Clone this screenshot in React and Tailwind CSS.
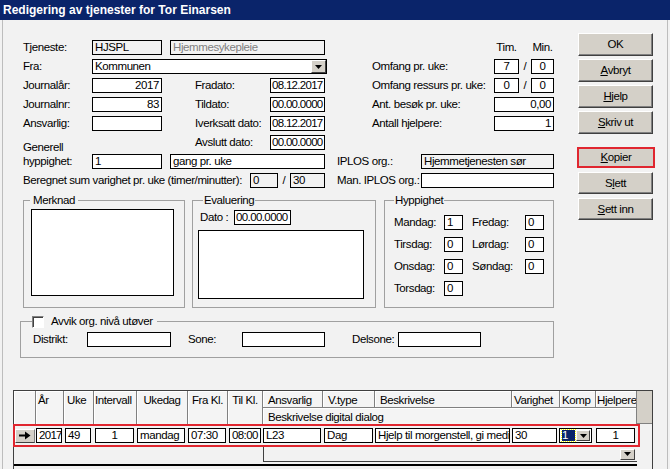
import React from "react";

const Box = ({ className = "", children }) => (
  <div
    className={
      "h-[15px] shrink-0 border border-black px-[2px] leading-[13px] whitespace-nowrap overflow-hidden " +
      className
    }
  >
    {children}
  </div>
);

const Tri = () => (
  <svg width="7" height="4" viewBox="0 0 7 4">
    <path d="M0 0h7L3.5 4z" fill="#000" />
  </svg>
);

const DropBtn = ({ className = "" }) => (
  <div
    className={
      "flex items-center justify-center shrink-0 bg-[#d4d0c8] border border-t-white border-l-white border-b-[#404040] border-r-[#404040] " +
      className
    }
  >
    <Tri />
  </div>
);

const Btn = ({ children, className = "" }) => (
  <div
    className={
      "w-[75px] flex items-center justify-center bg-[#d4d0c8] border border-t-white border-l-white border-b-[#404040] border-r-[#404040] shadow-[inset_-1px_-1px_0_#808080] " +
      className
    }
  >
    {children}
  </div>
);

const U = ({ children }) => <span className="underline">{children}</span>;

const Row = ({ children }) => <div className="flex h-[15px] items-center">{children}</div>;

const DateBox = ({ children }) => (
  <Box className="w-[55px] bg-white px-0 pl-[1px] tracking-[-0.7px]">{children}</Box>
);

const HCell = ({ children, className = "" }) => (
  <div
    className={
      "bg-[#f4f4f4] border-r border-[#808080] shadow-[inset_1px_1px_0_#fff] whitespace-nowrap overflow-hidden leading-[13px] pt-[3px] " +
      className
    }
  >
    {children}
  </div>
);

const DCell = ({ children, className = "" }) => (
  <div className="h-[19px] flex items-center">
    <Box className={"w-full bg-white " + className}>{children}</Box>
  </div>
);

export default function App() {
  return (
    <div className="w-[670px] h-[469px] overflow-hidden bg-[#f2f2f2] text-black text-[11.5px] tracking-[-0.4px] leading-[13px] whitespace-nowrap font-['Liberation_Sans',Arial,sans-serif]">
      <div className="h-[20px] bg-[#0a246a] text-white font-bold text-[12px] tracking-normal flex items-center pl-[3px]">
        Redigering av tjenester for Tor Einarsen
      </div>
      <div className="h-[449px] mx-[2px] border-x border-[#bdbdbd] flex flex-col">
        {/* top section */}
        <div className="flex pt-[13px]">
          <div className="ml-[20px] mt-[7px] w-[531px] flex flex-col">
            <div className="flex flex-col gap-[4px]">
              <Row>
                <div className="w-[314px] shrink-0 flex items-center">
                  <div className="w-[69px]">Tjeneste:</div>
                  <Box className="w-[70px] bg-[#f2f2f2]">HJSPL</Box>
                  <Box className="w-[155px] ml-[8px] bg-[#f2f2f2] text-[#808080]">Hjemmesykepleie</Box>
                </div>
                <div className="flex items-center pl-[157px]">
                  <div className="w-[25px] text-center">Tim.</div>
                  <div className="w-[12px]" />
                  <div className="w-[23px] text-center">Min.</div>
                </div>
              </Row>
              <Row>
                <div className="w-[314px] shrink-0 flex items-center">
                  <div className="w-[69px]">Fra:</div>
                  <Box className="w-[235px] bg-white flex items-center justify-between pr-0">
                    <span>Kommunen</span>
                    <DropBtn className="w-[15px] h-[13px]" />
                  </Box>
                </div>
                <div className="flex items-center pl-[35px]">
                  <div className="w-[122px]">Omfang pr. uke:</div>
                  <Box className="w-[25px] bg-white text-center">7</Box>
                  <div className="w-[12px] text-center">/</div>
                  <Box className="w-[23px] bg-white text-center">0</Box>
                </div>
              </Row>
              <Row>
                <div className="w-[314px] shrink-0 flex items-center">
                  <div className="w-[69px]">Journalår:</div>
                  <Box className="w-[70px] bg-white text-right">2017</Box>
                  <div className="ml-[33px] w-[75px]">Fradato:</div>
                  <DateBox>08.12.2017</DateBox>
                </div>
                <div className="flex items-center pl-[35px]">
                  <div className="w-[122px]">Omfang ressurs pr. uke:</div>
                  <Box className="w-[25px] bg-white text-center">0</Box>
                  <div className="w-[12px] text-center">/</div>
                  <Box className="w-[23px] bg-white text-center">0</Box>
                </div>
              </Row>
              <Row>
                <div className="w-[314px] shrink-0 flex items-center">
                  <div className="w-[69px]">Journalnr:</div>
                  <Box className="w-[70px] bg-white text-right">83</Box>
                  <div className="ml-[33px] w-[75px]">Tildato:</div>
                  <DateBox>00.00.0000</DateBox>
                </div>
                <div className="flex items-center pl-[35px]">
                  <div className="w-[122px]">Ant. besøk pr. uke:</div>
                  <Box className="w-[60px] bg-white text-right">0,00</Box>
                </div>
              </Row>
              <Row>
                <div className="w-[314px] shrink-0 flex items-center">
                  <div className="w-[69px]">Ansvarlig:</div>
                  <Box className="w-[70px] bg-white" />
                  <div className="ml-[33px] w-[75px]">Iverksatt dato:</div>
                  <DateBox>08.12.2017</DateBox>
                </div>
                <div className="flex items-center pl-[35px]">
                  <div className="w-[122px]">Antall hjelpere:</div>
                  <Box className="w-[60px] bg-white text-right">1</Box>
                </div>
              </Row>
              <Row>
                <div className="w-[314px] shrink-0 flex items-center">
                  <div className="ml-[172px] w-[75px]">Avslutt dato:</div>
                  <DateBox>00.00.0000</DateBox>
                </div>
              </Row>
              <Row>
                <div className="w-[314px] shrink-0 flex items-center">
                  <div className="w-[69px] h-[15px] flex flex-col justify-end pb-[1px]">
                    <div className="leading-[14px]">
                      Generell
                      <br />
                      hyppighet:
                    </div>
                  </div>
                  <Box className="w-[70px] bg-white">1</Box>
                  <Box className="w-[155px] ml-[8px] bg-white">gang pr. uke</Box>
                </div>
                <div className="flex items-center">
                  <div className="w-[84px]">IPLOS org.:</div>
                  <Box className="w-[133px] bg-[#f2f2f2]">Hjemmetjenesten sør</Box>
                </div>
              </Row>
              <Row>
                <div className="w-[314px] shrink-0 flex items-center">
                  <div className="w-[227px]">
                    Beregnet sum varighet pr. uke (timer/minutter):
                  </div>
                  <Box className="w-[28px] bg-[#f2f2f2]">0</Box>
                  <div className="w-[12px] text-center">/</div>
                  <Box className="w-[35px] bg-[#f2f2f2]">30</Box>
                </div>
                <div className="flex items-center">
                  <div className="w-[84px]">Man. IPLOS org.:</div>
                  <Box className="w-[133px] bg-white" />
                </div>
              </Row>
            </div>

            {/* group boxes */}
            <div className="flex mt-[6px]">
              <fieldset className="w-[162px] h-[114px] border border-[#a0a0a0]">
                <legend className="ml-[6px] px-[3px] leading-[13px]">Merknad</legend>
                <div className="mt-[2px] ml-[7px] w-[143px] h-[87px] bg-white border border-black" />
              </fieldset>
              <fieldset className="ml-[7px] w-[184px] h-[114px] border border-[#a0a0a0]">
                <legend className="ml-[10px] px-[1px] leading-[13px]">Evaluering</legend>
                <div className="mt-[3px] ml-[7px] flex items-center h-[15px]">
                  <div className="w-[34px]">Dato :</div>
                  <Box className="w-[57px] bg-white px-0 pl-[1px] tracking-[-0.6px]">00.00.0000</Box>
                </div>
                <div className="mt-[5px] ml-[5px] w-[166px] h-[69px] bg-white border border-black" />
              </fieldset>
              <fieldset className="ml-[8px] w-[170px] h-[114px] border border-[#a0a0a0]">
                <legend className="ml-[9px] px-[1px] leading-[13px]">Hyppighet</legend>
                <div className="mt-[8px] ml-[9px] flex flex-col gap-[7px]">
                  <Row>
                    <div className="w-[50px]">Mandag:</div>
                    <Box className="w-[19px] bg-white px-[1px]">1</Box>
                    <div className="ml-[9px] w-[53px]">Fredag:</div>
                    <Box className="w-[19px] bg-white px-[1px]">0</Box>
                  </Row>
                  <Row>
                    <div className="w-[50px]">Tirsdag:</div>
                    <Box className="w-[19px] bg-white px-[1px]">0</Box>
                    <div className="ml-[9px] w-[53px]">Lørdag:</div>
                    <Box className="w-[19px] bg-white px-[1px]">0</Box>
                  </Row>
                  <Row>
                    <div className="w-[50px]">Onsdag:</div>
                    <Box className="w-[19px] bg-white px-[1px]">0</Box>
                    <div className="ml-[9px] w-[53px]">Søndag:</div>
                    <Box className="w-[19px] bg-white px-[1px]">0</Box>
                  </Row>
                  <Row>
                    <div className="w-[50px]">Torsdag:</div>
                    <Box className="w-[19px] bg-white px-[1px]">0</Box>
                  </Row>
                </div>
              </fieldset>
            </div>
          </div>

          {/* buttons */}
          <div className="ml-[24px] flex flex-col">
            <div className="flex flex-col gap-[3px]">
              <Btn className="h-[23px]">OK</Btn>
              <Btn className="h-[23px]">
                <U>A</U>vbryt
              </Btn>
              <Btn className="h-[23px]">
                <U>H</U>jelp
              </Btn>
              <Btn className="h-[23px]">
                <U>S</U>kriv ut
              </Btn>
            </div>
            <div className="mt-[13px] -ml-[1px] w-[78px] h-[21px] border-2 border-[#e0262f] bg-[#d4d0c8] flex items-center justify-center">
              <span>
                <U>K</U>opier
              </span>
            </div>
            <div className="mt-[4px] flex flex-col gap-[4px]">
              <Btn className="h-[22px]">
                S<U>l</U>ett
              </Btn>
              <Btn className="h-[22px]">
                <U>S</U>ett inn
              </Btn>
            </div>
          </div>
        </div>

        {/* Avvik */}
        <fieldset className="ml-[17px] mt-[7px] w-[534px] h-[43px] border border-[#a0a0a0]">
          <legend className="ml-[11px] pr-[4px] leading-[13px]">
            <div className="flex items-center h-[13px]">
              <div className="w-[12px] h-[12px] bg-white border border-t-[#808080] border-l-[#808080] border-b-white border-r-white shadow-[inset_1px_1px_0_#404040]" />
              <span className="ml-[7px]">Avvik org. nivå utøver</span>
            </div>
          </legend>
          <div className="flex items-center h-[15px] mt-[4px] ml-[12px]">
            <div className="w-[54px]">Distrikt:</div>
            <Box className="w-[84px] bg-white" />
            <div className="ml-[17px] w-[54px]">Sone:</div>
            <Box className="w-[83px] bg-white" />
            <div className="ml-[27px] w-[46px]">Delsone:</div>
            <Box className="w-[83px] bg-white" />
          </div>
        </fieldset>

        {/* Grid */}
        <div className="ml-[10px] mt-[32px] w-[640px] flex-1 border-l border-t border-r border-[#404040] flex flex-col">
          <div className="grid grid-cols-[22px_28px_30px_43px_51px_40px_35px_60px_52px_137px_48px_36px_41px_15px] grid-rows-[17px_16px]">
            <HCell className="row-span-2" />
            <HCell className="row-span-2 pl-[2px]">År</HCell>
            <HCell className="row-span-2 pl-[3px]">Uke</HCell>
            <HCell className="row-span-2 pl-[1px]">Intervall</HCell>
            <HCell className="row-span-2 text-center">Ukedag</HCell>
            <HCell className="row-span-2 text-center">Fra Kl.</HCell>
            <HCell className="row-span-2 text-center">Til Kl.</HCell>
            <HCell className="pl-[5px] border-b">Ansvarlig</HCell>
            <HCell className="pl-[5px] border-b">V.type</HCell>
            <HCell className="pl-[5px] border-b">Beskrivelse</HCell>
            <HCell className="pl-[2px] border-b">Varighet</HCell>
            <HCell className="pl-[2px] border-b">Komp</HCell>
            <HCell className="pl-[1px] border-b">Hjelpere</HCell>
            <div className="row-span-2 col-start-14 row-start-1 bg-[#d4d0c8] border-b border-[#808080]" />
            <HCell className="col-start-8 col-span-6 row-start-2 pl-[5px] pt-[2px]">
              Beskrivelse digital dialog
            </HCell>
          </div>

          <div className="-ml-[1px] w-[627px] border-2 border-[#e0262f]">
            <div className="grid grid-cols-[20px_28px_30px_43px_51px_40px_35px_60px_52px_137px_48px_36px_41px] h-[19px]">
              <div className="h-[19px] flex items-center">
                <div className="w-[20px] h-[14px] bg-[#d4d0c8] border border-t-white border-l-white border-b-[#404040] border-r-[#808080] flex items-center justify-center">
                  <svg width="12" height="9" viewBox="0 0 12 9">
                    <rect x="0" y="3.5" width="7" height="2" fill="#000" />
                    <path d="M6 0.5L11.5 4.5L6 8.5z" fill="#000" />
                  </svg>
                </div>
              </div>
              <div className="pl-[1px] pr-[1px]">
                <DCell className="px-0 tracking-[-0.7px]">2017</DCell>
              </div>
              <div className="pl-[2px] pr-[2px]">
                <DCell className="px-[1px]">49</DCell>
              </div>
              <div className="pl-[2px] pr-[2px]">
                <DCell className="text-center">1</DCell>
              </div>
              <div className="pl-[1px] pr-[2px]">
                <DCell className="px-[1px]">mandag</DCell>
              </div>
              <div className="pl-[1px] pr-[1px]">
                <DCell className="px-[1px]">07:30</DCell>
              </div>
              <div className="pl-[2px] pr-[1px]">
                <DCell className="px-0 tracking-[-0.6px]">08:00</DCell>
              </div>
              <div className="pl-[1px] pr-[1px]">
                <DCell className="px-[1px]">L23</DCell>
              </div>
              <div className="pl-[2px] pr-[1px]">
                <DCell className="px-[1px]">Dag</DCell>
              </div>
              <div className="pl-[1px] pr-[1px]">
                <DCell className="px-[1px]">Hjelp til morgenstell, gi medis</DCell>
              </div>
              <div className="pl-[1px] pr-[2px]">
                <DCell className="px-[1px]">30</DCell>
              </div>
              <div className="pr-[3px]">
                <div className="h-[19px] flex items-center">
                  <div className="w-full h-[15px] bg-white border border-black flex items-center pl-[2px] pr-[1px] gap-[1px]">
                    <div className="w-[13px] h-[11px] bg-[#0a246a] text-white leading-[11px] outline outline-1 outline-dotted outline-[#ffff00] flex items-center">
                      1
                    </div>
                    <DropBtn className="ml-auto w-[14px] h-[11px]" />
                  </div>
                </div>
              </div>
              <div className="pl-[1px] pr-[1px]">
                <DCell className="text-center">1</DCell>
              </div>
            </div>
          </div>

          <div className="h-[17px] flex">
            <div className="ml-[249px] w-[374px] h-[15px] border-l border-b border-[#404040] flex items-center justify-end pr-[2px]">
              <DropBtn className="w-[15px] h-[11px]" />
            </div>
          </div>
          <div className="h-[2px] w-[623px] bg-black" />
        </div>
      </div>
    </div>
  );
}
